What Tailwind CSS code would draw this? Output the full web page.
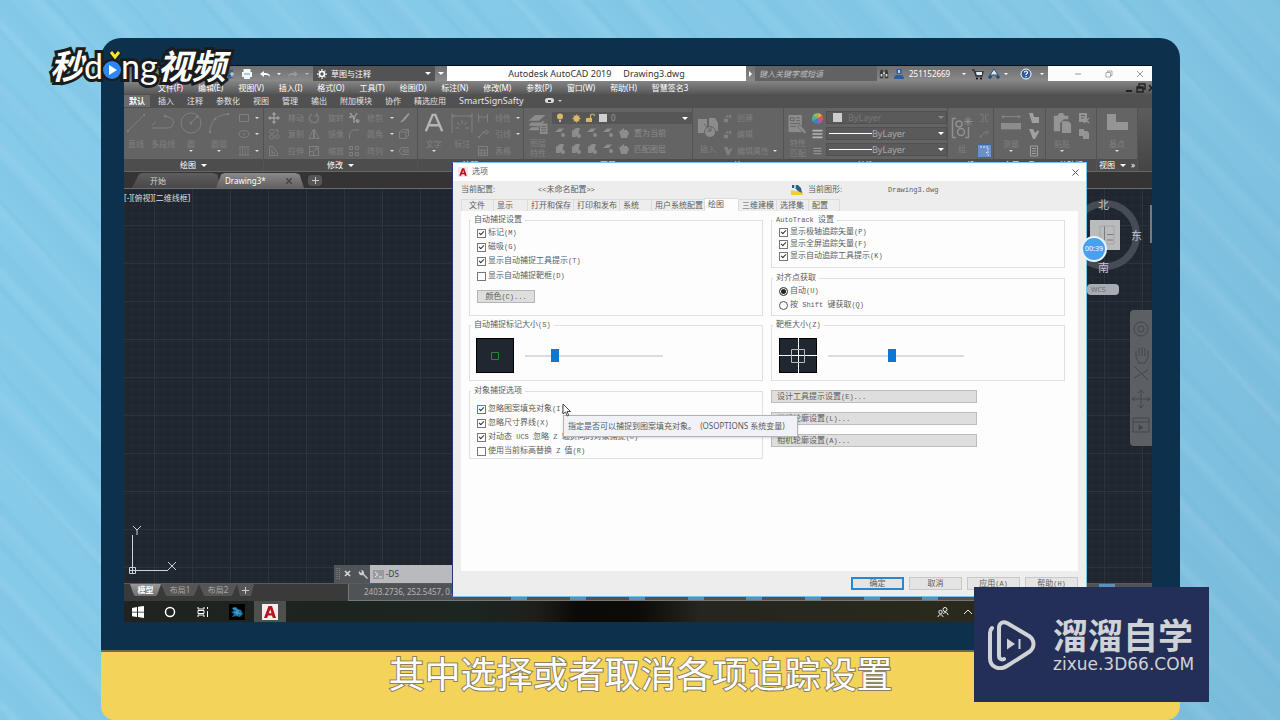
<!DOCTYPE html>
<html lang="zh-CN">
<head>
<meta charset="utf-8">
<title>AutoCAD 选项 - 绘图</title>
<script src="https://cdn.jsdelivr.net/npm/@tailwindcss/browser@4"></script>
</head>
<body class="relative flex min-h-screen flex-col overflow-hidden bg-[#82c6e4] bg-[repeating-linear-gradient(48deg,#5fa9cc00_0px,#5fa9cc22_5px,#5fa9cc00_9px,#5fa9cc1a_31px,#5fa9cc00_36px,#5fa9cc00_57px),repeating-linear-gradient(46deg,#ffffff00_0px,#ffffff12_11px,#ffffff00_17px,#ffffff00_43px),linear-gradient(120deg,#86cbea_0%,#84c8e6_60%,#7bbcdb_100%)] pt-[38px] font-['Noto_Sans','Noto_Sans_CJK_SC',sans-serif] text-[8px] leading-3">

<svg class="hidden" xmlns="http://www.w3.org/2000/svg">
  <symbol id="line" viewBox="0 0 22 22"><path d="M2 20 20 2" stroke="currentColor" fill="none"/><circle cx="20" cy="2" r="1.2" fill="currentColor"/><circle cx="2" cy="20" r="1.2" fill="currentColor"/></symbol>
  <symbol id="pline" viewBox="0 0 22 22"><path d="M0 16h16a5 5 0 0 0 0-11l-3-1M0 13l4-3" stroke="currentColor" fill="none"/><circle cx="13" cy="4" r="1.2" fill="currentColor"/></symbol>
  <symbol id="circle" viewBox="0 0 22 22"><circle cx="11" cy="11" r="10" stroke="currentColor" fill="none"/><path d="M11 11l6-6" stroke="currentColor"/><circle cx="11" cy="11" r="1.4" fill="currentColor"/><circle cx="17" cy="5" r="1.2" fill="currentColor"/></symbol>
  <symbol id="arc" viewBox="0 0 22 22"><path d="M2 20C2 9 9 3 20 2" stroke="currentColor" fill="none"/><circle cx="20" cy="2" r="1.3" fill="currentColor"/><circle cx="7" cy="7" r="1.3" fill="currentColor"/><circle cx="2" cy="20" r="1.3" fill="currentColor"/></symbol>
  <symbol id="rect" viewBox="0 0 12 12"><path d="M1.500 2.500h9v7h-9z" stroke="currentColor" fill="none"/></symbol>
  <symbol id="ellipse" viewBox="0 0 12 12"><ellipse cx="6" cy="6" rx="5" ry="3.500" stroke="currentColor" fill="none"/><path d="M5 6h2" stroke="currentColor"/></symbol>
  <symbol id="hatch" viewBox="0 0 12 12"><path d="M2 1v10M4.500 1v10M7 1v10M10 1v10M1 2h10M1 10h10" stroke="currentColor" stroke-width=".8" fill="none"/></symbol>
  <symbol id="move" viewBox="0 0 12 12"><path d="M6 1v10M1 6h10M4.500 2.500 6 1l1.500 1.500M4.500 9.500 6 11l1.500-1.500M2.500 4.500 1 6l1.500 1.500M9.500 4.500 11 6 9.500 7.500" stroke="currentColor" stroke-width="1.300" fill="none"/></symbol>
  <symbol id="copy" viewBox="0 0 12 12"><circle cx="4" cy="3.500" r="2.200" stroke="currentColor" fill="none"/><circle cx="3.500" cy="9" r="2" stroke="currentColor" fill="none"/><circle cx="9" cy="8.500" r="2" stroke="currentColor" fill="none"/><path d="M7 2h3v3" stroke="currentColor" fill="none"/></symbol>
  <symbol id="stretch" viewBox="0 0 12 12"><path d="M1.500 1.500v9h8V8L5 1.500zM4 4v4h3" stroke="currentColor" fill="none"/></symbol>
  <symbol id="rotate" viewBox="0 0 12 12"><path d="M4 2.200A4.500 4.500 0 1 0 9 3M9 1v3H6" stroke="currentColor" stroke-width="1.200" fill="none"/></symbol>
  <symbol id="mirror" viewBox="0 0 12 12"><path d="M5.500 1 1 10.500h4.500zM6.500 1 11 10.500H6.500z" stroke="currentColor" fill="none"/></symbol>
  <symbol id="scale" viewBox="0 0 12 12"><path d="M1.500 1.500h9v9h-9zM1.500 6.500h4v4M6 6l3-3M7 3h2v2" stroke="currentColor" fill="none"/></symbol>
  <symbol id="trim" viewBox="0 0 12 12"><path d="M2 1l5 6M9 1 5 7M6 6v5M8 8l3 2M1 5h3" stroke="currentColor" stroke-width="1.300" fill="none"/><circle cx="9.500" cy="9" r="1.500" stroke="currentColor" fill="none"/></symbol>
  <symbol id="fillet" viewBox="0 0 12 12"><path d="M1.500 11V7a5 5 0 0 1 5-5H11" stroke="currentColor" fill="none"/></symbol>
  <symbol id="array" viewBox="0 0 12 12"><path d="M1.500 1.500h3v3h-3zM7.500 1.500h3v3h-3zM1.500 7.500h3v3h-3zM7.500 7.500h3v3h-3z" stroke="currentColor" fill="none"/></symbol>
  <symbol id="erase" viewBox="0 0 12 12"><path d="M10.500 1 5 7l1.500 1.500L11.500 2z" fill="currentColor"/><path d="M5 7 2 10.500l4-1.500" fill="currentColor"/></symbol>
  <symbol id="cube" viewBox="0 0 12 12"><path d="M1.500 4h6.500v6.500H1.500zM1.500 4l2.500-2.500h6.500L8 4M10.500 1.500V8L8 10.500" stroke="currentColor" fill="none"/></symbol>
  <symbol id="offset" viewBox="0 0 12 12"><path d="M11 2.500H5a3.500 3.500 0 0 0 0 7h6M11 5H6a1 1 0 0 0 0 2h5" stroke="currentColor" fill="none"/></symbol>
  <symbol id="bigA" viewBox="0 0 22 22"><path d="M2 20 9.500 2h3L20 20M5 13.500h12" stroke="currentColor" stroke-width="2.600" fill="none"/></symbol>
  <symbol id="dim" viewBox="0 0 22 22"><path d="M1 1v20M21 1v20M1 4h20M3 2.500 1.500 4 3 5.500M19 2.500 20.500 4 19 5.500M11 8v4M6 10l3 3M16 10l-3 3M4 16h4M14 16h4" stroke="currentColor" fill="none"/></symbol>
  <symbol id="linear" viewBox="0 0 12 12"><path d="M1.500 2v8M10.500 2v8M1.500 5h9" stroke="currentColor" fill="none"/></symbol>
  <symbol id="leader" viewBox="0 0 12 12"><path d="M2 10 6 4h2" stroke="currentColor" fill="none"/><circle cx="9.500" cy="4" r="1.700" stroke="currentColor" fill="none"/><path d="M1 11v-3h2z" fill="currentColor"/></symbol>
  <symbol id="table" viewBox="0 0 12 12"><path d="M1.500 1.500h9v9h-9zM1.500 5h9M4.500 5v5.500M7.500 5v5.500M1.500 8h9" stroke="currentColor" fill="none"/></symbol>
  <symbol id="layers" viewBox="0 0 22 22"><path d="M1 7 8 1h11l-7 6zM1 12l3-3h10l3-2 1 1-6 5zM1 17l3-3h8v3z" fill="currentColor"/><path d="M13 10h8v11h-8z" fill="currentColor"/><path d="M14.500 13h5M14.500 15.500h5M14.500 18h5" stroke="#646464"/></symbol>
  <symbol id="layer1" viewBox="0 0 12 12"><path d="M1 5 5 1.500h5L7 5z" fill="currentColor"/><circle cx="9" cy="8" r="2" fill="currentColor"/></symbol>
  <symbol id="layer2" viewBox="0 0 12 12"><path d="M2 4 6 1h4L9 4v3l-3 3H2z" fill="currentColor"/><circle cx="9" cy="9" r="2" fill="currentColor"/></symbol>
  <symbol id="layer3" viewBox="0 0 12 12"><path d="M1 5 6 1v2h3l2 3-2 5H3L2 7z" fill="currentColor"/></symbol>
  <symbol id="insert" viewBox="0 0 22 22"><path d="M1 2h9v14H1zM12 1h6l3 5v8h-9z" fill="currentColor"/><circle cx="13" cy="15" r="5.500" fill="currentColor" stroke="#646464"/><path d="M7 7l7 7M14 10v4h-4" stroke="#646464" fill="none"/></symbol>
  <symbol id="blk" viewBox="0 0 12 12"><path d="M1 7h5v4H1zM7 2l4 1-4 4zM2 5l4-3v3z" fill="currentColor"/></symbol>
  <symbol id="tag" viewBox="0 0 12 12"><path d="M1 1h4l2 4 3-3 1 2-4 7H5z" fill="currentColor"/></symbol>
  <symbol id="match" viewBox="0 0 22 22"><path d="M1 1h14v18H1z" fill="currentColor"/><path d="M3 4h4v3H3zM9 4h4M9 7h4M3 10h10M3 13h6" stroke="#646464" fill="none"/><path d="M13 11l7 8-2 2-7-7z" fill="currentColor" stroke="#646464" stroke-width=".7"/></symbol>
  <symbol id="bars" viewBox="0 0 12 12"><path d="M0 1h12v2H0zM0 5h12v2H0zM0 9h12v2H0z" fill="currentColor"/></symbol>
  <symbol id="group" viewBox="0 0 22 22"><path d="M5 1.500H1.500v19H5M14 20.500h3.500V10" stroke="currentColor" stroke-width="1.500" fill="none"/><circle cx="8" cy="7" r="3" stroke="currentColor" stroke-width="1.500" fill="none"/><circle cx="10" cy="15" r="3.500" stroke="currentColor" stroke-width="1.500" fill="none"/><path d="M17 0v9M12.500 4.500h9M14 1.500l6 6M20 1.500l-6 6" stroke="currentColor"/></symbol>
  <symbol id="ungroup" viewBox="0 0 12 12"><path d="M1 2h4v8H1M11 2H8v8h3" stroke="currentColor" fill="none"/></symbol>
  <symbol id="measure" viewBox="0 0 22 22"><path d="M1 4h20M3 2 1 4l2 2M19 2l2 2-2 2" stroke="currentColor" fill="none"/><path d="M0 11h22v7H0z" fill="currentColor"/></symbol>
  <symbol id="pick" viewBox="0 0 12 12"><path d="M1 1h4l1 4h5v6H4z" fill="currentColor"/></symbol>
  <symbol id="calc" viewBox="0 0 12 12"><path d="M2.500 1h7v10h-7zM4 3.500h4M4 6h4M4 8.500h4" stroke="currentColor" fill="none"/></symbol>
  <symbol id="paste" viewBox="0 0 22 22"><path d="M2 3h4l2-3h4l2 3h4v4h-5L9 11v9H2z" fill="currentColor"/><path d="M11 9h7l3 3v10H11z" fill="currentColor"/></symbol>
  <symbol id="base" viewBox="0 0 22 22"><path d="M1 2h9v8h12v8H1z" fill="currentColor"/></symbol>
  <symbol id="cut" viewBox="0 0 12 12"><path d="M1 1h8v9H1z" fill="currentColor"/><path d="M6 6l5 5M11 6l-5 5" stroke="currentColor" stroke-width="1.300"/><path d="M3 3.500h4M3 6h3" stroke="#646464"/></symbol>
  <symbol id="dogear" viewBox="0 0 12 12"><path d="M1 1h5v2h3l2 2v6H5V8H1z" fill="currentColor"/></symbol>
  <symbol id="cadA" viewBox="0 0 16 16"><path d="M2 14 6.500 2h3.500L14 14h-3.200l-.8-2.500H6L5.200 14zM6.800 9.300h2.700L8.300 5.200z" fill="#b3161f" fill-rule="evenodd"/></symbol>
</svg>

<main class="mr-[100px] ml-[101px] flex flex-1 flex-col">
 <div class="flex flex-1 flex-col rounded-t-[20px] bg-[#0d304d] pt-[27px] pr-7 pb-7 pl-[23px]">
  <div class="relative flex flex-1 flex-col overflow-hidden border-t border-[#0a0f1c] bg-[#3a3a3a]">

   <!-- title bar -->
   <header class="flex h-[15px] shrink-0 items-center bg-linear-to-b from-[#6e6e6e] to-[#8a8a8a] text-white">
    <div class="flex w-[189px] items-center justify-end gap-[6px] pr-1">
     <svg class="h-3 w-2" viewBox="0 0 8 12"><path d="M1 2l5-1v9l-5 1z" fill="#3f5f86"/><path d="M3 6h4M5 4v5" stroke="#dfe8f2"/></svg>
     <svg class="h-3 w-3" viewBox="0 0 12 12"><path d="M2.500 1h7v3h-7zM1 4h10v5H1zM3 8h6v3H3z" fill="#f4f8fb"/><path d="M3 6h6" stroke="#5b9ad0"/></svg>
     <svg class="h-3 w-3" viewBox="0 0 12 12"><path d="M1 6l4-3v2c4 0 6 1 6 4-1-2-3-2-6-2v2z" fill="#fff"/></svg>
     <i class="border-x-2 border-t-2 border-x-transparent border-t-white"></i>
     <svg class="h-3 w-3" viewBox="0 0 12 12"><path d="M11 6 7 3v2C3 5 1 6 1 9c1-2 3-2 6-2v2z" fill="#999"/></svg>
     <i class="border-x-2 border-t-2 border-x-transparent border-t-[#bbb]"></i>
    </div>
    <button class="flex h-full w-[122px] items-center gap-1 bg-[#535353] px-1">
     <svg class="h-[10px] w-[10px]" viewBox="0 0 12 12"><circle cx="6" cy="6" r="3" fill="none" stroke="#fff" stroke-width="2"/><path d="M6 0v2M6 10v2M0 6h2M10 6h2M2 2l1 1M9 9l1 1M10 2 9 3M2 10l1-1" stroke="#fff" stroke-width="1.500"/></svg>
     <span>草图与注释</span>
     <i class="ml-auto border-x-[3px] border-t-[3px] border-x-transparent border-t-white"></i>
    </button>
    <div class="flex w-3 justify-center"><i class="border-x-[3px] border-t-[3px] border-x-transparent border-t-white"></i></div>
    <h1 class="flex h-full w-[299px] items-center justify-center gap-3 bg-white text-[9px] text-[#333]"><span>Autodesk AutoCAD 2019</span><span>Drawing3.dwg</span></h1>
    <div class="flex w-[9px] justify-center"><i class="border-y-[3px] border-l-[3px] border-y-transparent border-l-white"></i></div>
    <input aria-label="搜索" placeholder="键入关键字或短语" class="h-full w-[122px] bg-[#626262] px-1 text-[8px] italic placeholder:text-[#bdbdbd]">
    <div class="flex flex-1 items-center gap-1 pl-[2px]">
     <svg class="h-3 w-[10px]" viewBox="0 0 12 12"><path d="M1 11V5l1-4h3v10zM7 11V1h3l1 4v6z" fill="#3b3b3b"/><path d="M2 6h2v3H2zM8 6h2v3H8zM5 4h2v2H5z" fill="#ddd"/></svg>
     <svg class="h-3 w-3" viewBox="0 0 12 12"><path d="M3.500 1h5v5h-5zM1 11c0-4 2-4 5-4s5 0 5 4z" fill="#2f5c9c"/><path d="M5 2h2v3H5z" fill="#b9d1ef"/></svg>
     <span>251152669</span>
     <i class="ml-2 border-x-2 border-t-2 border-x-transparent border-t-white"></i>
     <svg class="ml-[2px] h-3 w-3" viewBox="0 0 12 12"><path d="M0 2h2l2 6h6l1-4H3" fill="none" stroke="#2b3442" stroke-width="1.300"/><path d="M4 4h6v3H5z" fill="#e6eef7"/><circle cx="5" cy="10.500" r="1"/><circle cx="9" cy="10.500" r="1"/></svg>
     <svg class="h-3 w-3" viewBox="0 0 12 12"><path d="M6 1 2 7h8z" fill="#dfe9f5" stroke="#2a4a78"/><path d="M0 9h4M8 9h4M2 7v4M10 7v4" stroke="#2a4a78" stroke-width="1.500"/></svg>
     <i class="border-x-2 border-t-2 border-x-transparent border-t-white"></i>
     <svg class="ml-2 h-3 w-3" viewBox="0 0 12 12"><circle cx="6" cy="6" r="5" fill="#2f5c9c" stroke="#fff"/><path d="M4.500 4.500c0-2 3-2 3 0 0 1.300-1.500 1-1.500 2.500M6 8v1.300" fill="none" stroke="#fff" stroke-width="1.200"/></svg>
     <i class="ml-1 border-x-2 border-t-2 border-x-transparent border-t-white"></i>
    </div>
    <div class="flex h-full w-[104px] items-center justify-between bg-[#fcfcfc] pr-2 pl-[26px]">
     <button aria-label="最小化"><svg class="h-2 w-2" viewBox="0 0 8 8"><path d="M1 4h6" stroke="#999"/></svg></button>
     <button aria-label="还原"><svg class="h-2 w-2" viewBox="0 0 8 8"><path d="M1 2.500h4.500V7H1zM2.500 2.500v-1.500H7v4.500H5.500" fill="none" stroke="#999" stroke-width=".8"/></svg></button>
     <button aria-label="关闭"><svg class="h-2 w-2" viewBox="0 0 8 8"><path d="M1 1l6 6M7 1 1 7" stroke="#999"/></svg></button>
    </div>
   </header>

   <!-- menu bar -->
   <nav class="flex h-[13px] shrink-0 items-center gap-[15px] bg-linear-to-b from-[#858585] to-[#575757] pl-[34px] whitespace-nowrap text-white">
    <a href="#">文件(F)</a><a href="#">编辑(E)</a><a href="#">视图(V)</a><a href="#">插入(I)</a><a href="#">格式(O)</a><a href="#">工具(T)</a><a href="#">绘图(D)</a><a href="#">标注(N)</a><a href="#">修改(M)</a><a href="#">参数(P)</a><a href="#">窗口(W)</a><a href="#">帮助(H)</a><a href="#">智慧签名3</a>
    <svg class="ml-auto h-[10px] w-[26px]" viewBox="0 0 26 10"><path d="M0 8h6" stroke="#222" stroke-width="2"/><path d="M11 4h6v5h-6zM13 4V1h6v5h-2M11 5h6" fill="none" stroke="#222" stroke-width="1.400"/><path d="M23 2l5 6M28 2l-5 6" stroke="#222" stroke-width="1.500"/></svg>
   </nav>

   <!-- ribbon tabs -->
   <nav class="flex h-[13px] shrink-0 items-center gap-[13px] bg-[#515151] whitespace-nowrap text-[#e4e4e4]">
    <a href="#" class="-mr-[5px] bg-[#6b6b6b] px-[5px] font-bold text-white">默认</a><a href="#">插入</a><a href="#">注释</a><a href="#">参数化</a><a href="#">视图</a><a href="#">管理</a><a href="#">输出</a><a href="#">附加模块</a><a href="#">协作</a><a href="#">精选应用</a><a href="#" class="text-[9px]">SmartSignSafty</a>
    <span class="ml-2 flex items-center gap-1"><i class="flex h-[5px] w-[9px] items-center justify-center rounded-sm bg-[#ddd]"><i class="h-[2px] w-[3px] bg-[#444]"></i></i><i class="border-x-2 border-t-2 border-x-transparent border-t-[#ccc]"></i></span>
   </nav>

   <!-- ribbon panels -->
   <div class="flex h-16 shrink-0 border-t border-[#505050] bg-[#646464] text-[#808080] [&_i.dn]:mx-auto [&_i.dn]:h-0 [&_i.dn]:w-0 [&_i.dn]:border-x-2 [&_i.dn]:border-t-2 [&_i.dn]:border-x-transparent [&_i.dn]:border-t-[#dcdcdc] [&_section]:flex [&_section]:shrink-0 [&_section]:flex-col [&_section]:border-r [&_section]:border-[#535353] [&_section>div]:flex [&_section>div]:h-[51px] [&_section>div]:pt-[2px] [&_h2]:flex [&_h2]:h-3 [&_h2]:items-center [&_h2]:justify-center [&_h2]:gap-[5px] [&_h2]:bg-[#4d4d4d] [&_h2]:text-white [&_button]:whitespace-nowrap">
    <section class="w-[140px]">
     <div>
      <button class="flex w-6 flex-col items-center"><svg class="mt-[2px] mb-1 h-[22px] w-5 shrink-0"><use href="#line"/></svg>直线</button>
      <button class="flex w-[30px] flex-col items-center"><svg class="mt-[2px] mb-1 h-[22px] w-[22px] shrink-0"><use href="#pline"/></svg>多段线</button>
      <button class="flex w-[26px] flex-col items-center"><svg class="mt-[2px] mb-1 h-[22px] w-[22px] shrink-0"><use href="#circle"/></svg>圆<i class="dn"></i></button>
      <button class="flex w-[30px] flex-col items-center"><svg class="mt-[2px] mb-1 h-[22px] w-[22px] shrink-0"><use href="#arc"/></svg>圆弧<i class="dn"></i></button>
      <div class="grid flex-1 grid-cols-2 grid-rows-3 items-center pl-1"><svg class="h-3 w-3"><use href="#rect"/></svg><i class="dn"></i><svg class="h-3 w-3"><use href="#ellipse"/></svg><i class="dn"></i><svg class="h-3 w-3"><use href="#hatch"/></svg><i class="dn"></i></div>
     </div>
     <h2>绘图<i class="border-x-[3px] border-t-[3px] border-x-transparent border-t-white"></i></h2>
    </section>
    <section class="w-[154px]">
     <div>
      <div class="grid flex-1 grid-cols-[16px_24px_16px_24px_16px_22px_12px_16px] grid-rows-3 items-center pl-1 text-left">
       <svg class="h-3 w-3 text-[#a0a0a0]"><use href="#move"/></svg><button>移动</button><svg class="h-3 w-3"><use href="#rotate"/></svg><button>旋转</button><svg class="h-3 w-3 text-[#a0a0a0]"><use href="#trim"/></svg><button>修剪</button><i class="dn"></i><svg class="h-3 w-3 text-[#a0a0a0]"><use href="#erase"/></svg>
       <svg class="h-3 w-3"><use href="#copy"/></svg><button>复制</button><svg class="h-3 w-3"><use href="#mirror"/></svg><button>镜像</button><svg class="h-3 w-3"><use href="#fillet"/></svg><button>圆角</button><i class="dn"></i><svg class="h-3 w-3"><use href="#cube"/></svg>
       <svg class="h-3 w-3"><use href="#stretch"/></svg><button>拉伸</button><svg class="h-3 w-3"><use href="#scale"/></svg><button>缩放</button><svg class="h-3 w-3"><use href="#array"/></svg><button>阵列</button><i class="dn"></i><svg class="h-3 w-3"><use href="#offset"/></svg>
      </div>
     </div>
     <h2>修改<i class="border-x-[3px] border-t-[3px] border-x-transparent border-t-white"></i></h2>
    </section>
    <section class="w-[106px]">
     <div>
      <button class="flex w-[32px] flex-col items-center"><svg class="mt-[2px] mb-1 h-[22px] w-5 shrink-0 text-[#b4b4b4]"><use href="#bigA"/></svg>文字<i class="dn"></i></button>
      <button class="flex w-[26px] flex-col items-center"><svg class="mt-[2px] mb-1 h-[22px] w-[22px] shrink-0"><use href="#dim"/></svg>标注</button>
      <div class="grid flex-1 grid-cols-[16px_20px_10px] grid-rows-3 items-center pl-[2px]"><svg class="h-3 w-3"><use href="#linear"/></svg><button>线性</button><i class="dn"></i><svg class="h-3 w-3"><use href="#leader"/></svg><button>引线</button><i class="dn"></i><svg class="h-3 w-3"><use href="#table"/></svg><button>表格</button></div>
     </div>
     <h2>注释</h2>
    </section>
    <section class="w-[169px]">
     <div>
      <button class="w-[28px] leading-[10px]"><svg class="mx-auto mt-[2px] mb-[3px] h-[21px] w-[22px] text-[#8c8c8c]"><use href="#layers"/></svg>图层<br>特性</button>
      <div class="flex flex-1 flex-col">
       <div class="mt-[2px] flex h-3 items-center gap-1 bg-[#565656] px-1">
        <svg class="h-[10px] w-2" viewBox="0 0 8 10"><circle cx="4" cy="3.500" r="3" fill="#d9b869"/><path d="M3 7h2v2H3z" fill="#bbb"/></svg>
        <svg class="ml-1 h-[9px] w-[9px]" viewBox="0 0 10 10"><circle cx="5" cy="5" r="3.500" fill="#dcb765"/><path d="M5 0v10M0 5h10M1.500 1.500l7 7M8.500 1.500l-7 7" stroke="#dcb765" stroke-width=".6"/></svg>
        <svg class="h-[10px] w-[10px]" viewBox="0 0 10 10"><path d="M1 5h6v4H1z" fill="#d9b85f"/><path d="M5.500 5V3a2 2 0 0 1 4 0" fill="none" stroke="#d9b85f" stroke-width="1.200"/></svg>
        <i class="h-2 w-2 bg-[#cfcfcf]"></i><span class="text-[#999]">0</span>
        <i class="ml-auto border-x-[3px] border-t-[3px] border-x-transparent border-t-white"></i>
       </div>
       <div class="mt-[3px] grid grid-cols-[16px_16px_16px_16px_16px_1fr] grid-rows-2 items-center gap-y-1 pl-[2px] text-left text-[#8c8c8c]">
        <svg class="h-3 w-3"><use href="#layer1"/></svg><svg class="h-3 w-3"><use href="#layer2"/></svg><svg class="h-3 w-3"><use href="#layer1"/></svg><svg class="h-3 w-3"><use href="#layer1"/></svg><svg class="h-3 w-3"><use href="#layer3"/></svg><span>置为当前</span>
        <svg class="h-3 w-3"><use href="#layer2"/></svg><svg class="h-3 w-3"><use href="#layer2"/></svg><svg class="h-3 w-3"><use href="#layer2"/></svg><svg class="h-3 w-3"><use href="#layer1"/></svg><svg class="h-3 w-3"><use href="#layer3"/></svg><span>匹配图层</span>
       </div>
      </div>
     </div>
     <h2>图层</h2>
    </section>
    <section class="w-[91px]">
     <div>
      <button class="w-[30px]"><svg class="mx-auto mt-[2px] mb-1 h-[22px] w-[22px] text-[#8c8c8c]"><use href="#insert"/></svg>插入</button>
      <div class="grid flex-1 grid-cols-[14px_34px_8px] grid-rows-3 items-center text-left"><svg class="h-3 w-[10px]"><use href="#blk"/></svg><span>创建</span><i></i><svg class="h-3 w-[10px]"><use href="#blk"/></svg><span>编辑</span><i></i><svg class="h-3 w-[10px]"><use href="#tag"/></svg><span>编辑属性</span><i class="dn"></i></div>
     </div>
     <h2>块</h2>
    </section>
    <section class="w-[164px]">
     <div>
      <button class="w-[28px] leading-[10px]"><svg class="mx-auto mt-[2px] mb-[3px] h-[21px] w-[22px] text-[#8c8c8c]"><use href="#match"/></svg>特性<br>匹配</button>
      <div class="grid w-[14px] grid-rows-3 items-center"><svg class="h-[11px] w-[11px]" viewBox="0 0 12 12"><path d="M6 6V0a6 6 0 0 1 5.200 3z" fill="#f0a53a"/><path d="M6 6l5.200-3a6 6 0 0 1 0 6z" fill="#e2574c"/><path d="M6 6l5.200 3A6 6 0 0 1 6 12z" fill="#a05cc0"/><path d="M6 6v6a6 6 0 0 1-5.200-3z" fill="#3d7fd0"/><path d="M6 6 .8 9a6 6 0 0 1 0-6z" fill="#3bb5a0"/><path d="M6 6 .8 3A6 6 0 0 1 6 0z" fill="#8cc152"/></svg><svg class="h-[10px] w-[11px] text-[#b5b5b5]"><use href="#bars"/></svg><svg class="h-2 w-[11px] text-[#909090]"><use href="#bars"/></svg></div>
      <div class="grid flex-1 grid-rows-[13px_13px_13px] content-start gap-[3px] pt-[1px] text-[9px] [&>div]:flex [&>div]:items-center [&>div]:border [&>div]:border-[#505050] [&>div]:bg-[#5a5a5a] [&>div]:px-[2px] [&>div]:leading-[11px]">
       <div><i class="mr-[6px] ml-1 h-[9px] w-[9px] bg-[#cdcdcd]"></i><span class="text-[#777]">ByLayer</span><i class="ml-auto border-x-[3px] border-t-[3px] border-x-transparent border-t-[#888]"></i></div>
       <div><i class="h-px w-[43px] bg-white"></i><span class="text-[#aaa]">ByLayer</span><i class="ml-auto border-x-[3px] border-t-[3px] border-x-transparent border-t-white"></i></div>
       <div><i class="h-px w-[43px] bg-white"></i><span class="text-[#aaa]">ByLayer</span><i class="ml-auto border-x-[3px] border-t-[3px] border-x-transparent border-t-white"></i></div>
      </div>
     </div>
     <h2>特性</h2>
    </section>
    <section class="w-[46px]">
     <div>
      <button class="w-[28px]"><svg class="mx-auto mt-[2px] mb-1 h-[22px] w-[22px] text-[#909090]"><use href="#group"/></svg>组</button>
      <div class="grid w-4 grid-rows-3 items-center justify-items-center"><svg class="h-3 w-[10px]"><use href="#ungroup"/></svg><svg class="h-3 w-[10px]"><use href="#leader"/></svg><svg class="h-[14px] w-[15px]" viewBox="0 0 15 14"><path d="M.5.500h14v13H.500z" fill="#6c8fc4" stroke="#3f66a8"/><path d="M3 3h8v7M9 8l3 4" stroke="#d9e6f7" fill="none" stroke-dasharray="2 1"/></svg></div>
     </div>
     <h2>组</h2>
    </section>
    <section class="w-[52px]">
     <div>
      <button class="flex w-[34px] flex-col items-center"><svg class="mt-[2px] mb-1 h-[22px] w-5 shrink-0 text-[#8c8c8c]"><use href="#measure"/></svg>测量<i class="dn"></i></button>
      <div class="grid w-3 grid-rows-3 items-center text-[#a0a0a0]"><svg class="h-3 w-3"><use href="#pick"/></svg><svg class="h-3 w-3"><use href="#tag"/></svg><svg class="h-3 w-3"><use href="#calc"/></svg></div>
     </div>
     <h2>实用工具</h2>
    </section>
    <section class="w-[51px]">
     <div>
      <button class="flex w-[32px] flex-col items-center"><svg class="mt-[2px] mb-1 h-[22px] w-5 shrink-0 text-[#959595]"><use href="#paste"/></svg>粘贴<i class="dn"></i></button>
      <div class="grid w-3 grid-rows-3 items-center text-[#959595]"><svg class="h-3 w-3"><use href="#cut"/></svg><svg class="h-3 w-3"><use href="#dogear"/></svg></div>
     </div>
     <h2>剪贴板</h2>
    </section>
    <section class="w-[41px]">
     <div>
      <button class="flex w-full flex-col items-center"><svg class="mt-[2px] mb-1 h-[22px] w-[22px] shrink-0 text-[#959595]"><use href="#base"/></svg>基点<i class="dn"></i></button>
     </div>
     <h2>视图<i class="border-x-[3px] border-t-[3px] border-x-transparent border-t-white"></i>»</h2>
    </section>
    <div class="flex-1 bg-linear-to-b from-[#5c5c5c] to-[#454545]"></div>
   </div>

   <!-- drawing tabs -->
   <nav class="flex h-[18px] shrink-0 items-end border-y border-t-[#666] border-b-[#6a6a6a] bg-[#343434] pl-2 text-[#cfcfcf]">
    <a href="#" class="flex h-[15px] w-[88px] items-center bg-linear-to-b from-[#5e5e5e] to-[#484848] pl-[18px] [clip-path:polygon(0_100%,8%_8%,12%_0,92%_0,97%_10%,100%_100%)]">开始</a>
    <a href="#" class="-ml-1 flex h-[15px] w-[88px] items-center justify-between bg-linear-to-b from-[#8a8a8a] to-[#616161] pr-3 pl-[9px] text-white [clip-path:polygon(0_100%,6%_8%,10%_0,90%_0,95%_10%,100%_100%)]"><span>Drawing3*</span><svg class="h-[6px] w-[6px]" viewBox="0 0 6 6"><path d="M0 0l6 6M6 0 0 6" stroke="#444" stroke-width="1.500"/></svg></a>
    <button aria-label="新图形" class="ml-1 flex h-[11px] w-[14px] items-center justify-center self-center rounded-sm bg-[#555]"><svg class="h-[7px] w-[7px]" viewBox="0 0 7 7"><path d="M3.500 0v7M0 3.500h7" stroke="#ccc"/></svg></button>
   </nav>

   <!-- model space -->
   <div class="relative flex-1 bg-[#1f2630] bg-[linear-gradient(90deg,#2b333e_1px,transparent_1px),linear-gradient(#2b333e_1px,transparent_1px),repeating-linear-gradient(90deg,#232b35_0px_1px,transparent_1px_8px),repeating-linear-gradient(#232b35_0px_1px,transparent_1px_8px)] bg-[size:38px_38px,38px_38px,auto,auto] bg-[position:30px_0px,0px_36px,0_0,0_0]">
    <p class="py-[3px] text-[8px] text-[#dedede]">[-][俯视][二维线框]</p>
    <svg class="absolute bottom-2 left-1 h-[50px] w-[52px]" viewBox="0 0 52 50" fill="none" stroke="#cfd3d8"><path d="M4.500 10v32M8 45.500h32M1.500 42.500h6v6h-6zM1 45.500h7M4.500 42v7M5 1l4 4v5M13 1 9 5M40 37l8 8M48 37l-8 8"/></svg>
    <div class="absolute top-[11px] right-3 h-[70px] w-[70px] rounded-full border-[7px] border-[#454c55]"></div>
    <div class="absolute top-[31px] right-8 h-[30px] w-[30px] bg-[#b9bbbd]"><svg class="h-full w-full" viewBox="0 0 30 30" fill="none" stroke="#777c82"><path d="M14.500 6v14M17 14.500h7M17 20h6" /><path d="M10 6h14v18H10z" stroke="#a3a6aa"/></svg></div>
    <span class="absolute top-[10px] right-[43px] text-[11px] text-[#c3c6c9]">北</span>
    <span class="absolute top-[41px] right-[10px] text-[11px] text-[#c3c6c9]">东</span>
    <span class="absolute top-[73px] right-[43px] text-[11px] text-[#c3c6c9]">南</span>
    <span class="absolute top-[95px] right-[33px] h-[11px] w-8 rounded-sm bg-[#a9abb2] pl-1 text-[7px] leading-[11px] text-[#6c6e76]">WCS</span>
    <i class="absolute top-4 right-0 h-[38px] w-[2px] bg-[#777c83]"></i>
    <div class="absolute top-[121px] right-0 h-[136px] w-[22px] rounded-l-sm bg-[#5c5f64]">
     <svg class="h-full w-full" viewBox="0 0 22 136" fill="none" stroke="#43464b"><circle cx="11" cy="19" r="7"/><circle cx="11" cy="19" r="3"/><path d="M6 41v6l3 6h6l3-6v-7M9 46v-8M12 46v-9M15 46v-8M4 68l14-8M4 56l14 14M11 80v18M2 89h18M8 83l3-3 3 3M8 95l3 3 3-3M5 87l-3 2 3 2M17 87l3 2-3 2M3 108h16v14H3zM3 112h16"/><path d="M9 115v5l4-2.500z" fill="#43464b"/></svg>
    </div>
    <!-- command line -->
    <div class="absolute bottom-0 left-[210px] flex h-[18px] w-[120px] items-center bg-[#505357]">
     <svg class="h-full w-9 shrink-0" viewBox="0 0 36 18"><path d="M3 3v12M5.500 3v12" stroke="#888" stroke-dasharray="1 1"/><path d="M11 6l5 5M16 6l-5 5" stroke="#ddd" stroke-width="1.500"/><path d="M25 6a3 3 0 0 0 4 4l4 4 1-1-4-4a3 3 0 0 0-3-4l1 2-1 1z" fill="#ccc"/></svg>
     <label class="flex h-full flex-1 items-center gap-[2px] bg-[#b9babe] pl-[3px] text-[#3c3c3c]"><svg class="h-[9px] w-[11px]" viewBox="0 0 11 9"><path d="M0 0h11v9H0z" fill="#999ba0"/><path d="M2 2l3 2.500L2 7M6 7h3" stroke="#eee" fill="none"/></svg><input aria-label="命令" value="-DS" class="w-9 text-[8px]"></label>
    </div>
   </div>

   <!-- layout tabs and status bar -->
   <div class="flex h-[18px] shrink-0 border-t border-[#5b5b5b] bg-[#3a3a3a] text-[#a8a8a8]">
    <nav class="flex w-[224px] items-start pl-[6px]">
     <a href="#" class="w-[31px] bg-linear-to-b from-[#999] to-[#6e6e6e] text-center font-bold text-white [clip-path:polygon(0_0,100%_0,88%_90%,84%_100%,16%_100%,12%_90%)]">模型</a>
     <a href="#" class="w-[38px] bg-[#555] text-center [clip-path:polygon(0_0,100%_0,88%_90%,84%_100%,16%_100%,12%_90%)]">布局1</a>
     <a href="#" class="w-[38px] bg-[#555] text-center [clip-path:polygon(0_0,100%_0,88%_90%,84%_100%,16%_100%,12%_90%)]">布局2</a>
     <button aria-label="新布局" class="flex h-3 w-[17px] items-center justify-center bg-[#555] [clip-path:polygon(0_0,100%_0,82%_100%,18%_100%)]"><svg class="h-[7px] w-[7px]" viewBox="0 0 7 7"><path d="M3.500 0v7M0 3.500h7" stroke="#ccc"/></svg></button>
    </nav>
    <div class="flex flex-1 items-end border-b border-l border-[#777] bg-[#505356] pl-[15px] text-[#b5b5b5]">
     <span class="w-[110px] self-center">2403.2736, 252.5457, 0.0000</span>
     <div class="flex h-full flex-1 justify-around px-4 [&>i]:w-4 [&>i]:bg-[#5b8fc0]"><i></i><i></i><i></i><i></i><i></i><i></i><i></i><i></i><i></i><i></i><i></i></div>
    </div>
   </div>

   <!-- taskbar -->
   <footer class="flex h-[21px] shrink-0 items-center bg-[linear-gradient(90deg,#20231f_0%,#1b2521_34%,#1f1f1a_40%,#0a0a08_44%,#0c0b07_50%,#24261f_56%,#292a1c_80%,#25261a_100%)]">
    <svg class="ml-2 h-3 w-3" viewBox="0 0 12 12"><path d="M0 2l5-1v4.700H0zM6 .800 12 0v5.700H6zM0 6.500h5V11l-5-.8zM6 6.500h6V12l-6-.9z" fill="#fff"/></svg>
    <svg class="ml-5 h-3 w-3" viewBox="0 0 12 12"><circle cx="6" cy="6" r="4.500" fill="none" stroke="#fff" stroke-width="1.500"/></svg>
    <svg class="ml-[21px] h-3 w-3" viewBox="0 0 12 12"><path d="M1 1v2h6V1M1 11V9h6v2M1 4.500h6v3H1zM10.500 1v2M10.500 5v6" fill="none" stroke="#fff"/></svg>
    <span class="ml-5 flex h-4 w-4 items-center justify-center bg-black"><svg class="h-[14px] w-[14px]" viewBox="0 0 14 14"><path d="M2 3l4-1 2 2 3 1 2 4-3 3-4-1-4 1 2-3-3-2 3-1z" fill="#1a6f9f"/><path d="M3 3c3 0 3 3 6 3M4 8c2-1 5 0 7 1M7 6v4" stroke="#49b4e8" fill="none"/></svg></span>
    <span class="ml-[9px] flex h-full w-8 items-center justify-center bg-[#4d504d]"><span class="h-4 w-4 bg-[#f6ecec]"><svg class="h-4 w-4"><use href="#cadA"/></svg></span></span>
    <svg class="mr-[14px] ml-auto h-3 w-3" viewBox="0 0 12 12" fill="none" stroke="#eee"><circle cx="8" cy="3.500" r="2"/><circle cx="3.500" cy="6" r="1.700"/><path d="M1 11c0-3 5-3 5 0M6 8c1-2 5-2 5 1"/></svg>
    <svg class="mr-[179px] h-2 w-[10px]" viewBox="0 0 10 8"><path d="M1 6l4-4 4 4" fill="none" stroke="#eee"/></svg>
   </footer>

   <!-- options dialog -->
   <div role="dialog" aria-label="选项" class="absolute top-[96px] right-[65px] bottom-[25px] left-[328px] flex flex-col border border-[#7cc1e6] border-l-[#223a7a] bg-[#ededee] font-['Liberation_Serif','Noto_Sans_CJK_SC',serif] text-[#5c5c5c] [&_kbd]:font-['Liberation_Mono'] [&_kbd]:text-[7px]">
    <div class="flex h-[18px] shrink-0 items-center gap-1 bg-white px-[5px]">
     <svg class="h-[10px] w-[10px] bg-[#f7e6e6]"><use href="#cadA"/></svg><span>选项</span>
     <button aria-label="关闭" class="ml-auto"><svg class="mr-[2px] h-[7px] w-[7px]" viewBox="0 0 7 7"><path d="M.500.500l6 6M6.500.500l-6 6" stroke="#555"/></svg></button>
    </div>
    <div class="flex h-[17px] shrink-0 items-center px-2">
     <span class="w-[77px]">当前配置:</span><span class="w-[253px]"><kbd>&lt;&lt;</kbd>未命名配置<kbd>&gt;&gt;</kbd></span>
     <svg class="mr-[5px] h-3 w-3" viewBox="0 0 12 12"><path d="M0 6l4 1h7l1 4H0z" fill="#f0cf2a"/><path d="M1 1h6l3 3 1 5-4-2-3-3H1z" fill="#2d5f8d"/><path d="M3 1h2v3H3z" fill="#9fd0ef"/></svg>
     <span class="w-20">当前图形:</span><kbd>Drawing3.dwg</kbd>
    </div>
    <div role="tablist" class="mx-2 flex h-[13px] shrink-0 items-end whitespace-nowrap [&>button]:h-3 [&>button]:border-t [&>button]:border-l [&>button]:border-[#dcdcdc] [&>button]:pl-[3px] [&>button]:text-left">
     <button role="tab" class="w-8">&nbsp; 文件</button><button role="tab" class="w-[34px]">显示</button><button role="tab" class="w-[46px]">打开和保存</button><button role="tab" class="w-[46px]">打印和发布</button><button role="tab" class="w-8">系统</button><button role="tab" class="w-[53px]">用户系统配置</button><button role="tab" aria-selected="true" class="w-[34px] self-start bg-[#fdfdfd] pb-[13px]">绘图</button><button role="tab" class="w-[38px]">三维建模</button><button role="tab" class="w-8">选择集</button><button role="tab" class="w-8 border-r">配置</button>
    </div>
    <div class="mx-2 grid flex-1 grid-cols-[294px_294px] content-start gap-x-2 bg-[#fdfdfd] px-2 pt-[3px] [&_fieldset]:border [&_fieldset]:border-[#e0e0e0] [&_fieldset]:pl-[7px] [&_legend]:-ml-[6px] [&_legend]:px-[3px] [&_label]:flex [&_label]:items-center [&_label]:gap-[2px] [&_label]:whitespace-nowrap
      [&_input[type=checkbox]]:h-[9px] [&_input[type=checkbox]]:w-[9px] [&_input[type=checkbox]]:appearance-none [&_input[type=checkbox]]:border [&_input[type=checkbox]]:border-[#777] [&_input[type=checkbox]]:bg-white
      [&_input[type=checkbox]]:after:mt-[1px] [&_input[type=checkbox]]:after:ml-[1px] [&_input[type=checkbox]]:after:hidden [&_input[type=checkbox]]:after:h-[3px] [&_input[type=checkbox]]:after:w-[5px] [&_input[type=checkbox]]:after:-rotate-45 [&_input[type=checkbox]]:after:border-b [&_input[type=checkbox]]:after:border-l [&_input[type=checkbox]]:after:border-[#333] [&_input[type=checkbox]:checked]:after:block
      [&_input[type=radio]]:h-[9px] [&_input[type=radio]]:w-[9px] [&_input[type=radio]]:appearance-none [&_input[type=radio]]:rounded-full [&_input[type=radio]]:border [&_input[type=radio]]:border-[#555] [&_input[type=radio]:checked]:bg-[#222] [&_input[type=radio]:checked]:shadow-[inset_0_0_0_1px_white]
      [&_input[type=range]]:h-[13px] [&_input[type=range]]:appearance-none [&_input[type=range]]:bg-[linear-gradient(#dcdcdc,#dcdcdc)] [&_input[type=range]]:bg-[size:100%_2px] [&_input[type=range]]:bg-center [&_input[type=range]]:bg-no-repeat [&_input::-webkit-slider-thumb]:h-[13px] [&_input::-webkit-slider-thumb]:w-2 [&_input::-webkit-slider-thumb]:appearance-none [&_input::-webkit-slider-thumb]:bg-[#0a78d7]">
     <div class="flex flex-col gap-[3px]">
      <fieldset class="pb-3"><legend>自动捕捉设置</legend>
       <label class="h-[14px]"><input type="checkbox" checked><span>标记<kbd>(M)</kbd></span></label>
       <label class="h-[14px]"><input type="checkbox" checked><span>磁吸<kbd>(G)</kbd></span></label>
       <label class="h-[14px]"><input type="checkbox" checked><span>显示自动捕捉工具提示<kbd>(T)</kbd></span></label>
       <label class="h-4"><input type="checkbox"><span>显示自动捕捉靶框<kbd>(D)</kbd></span></label>
       <button class="mt-[6px] block h-[13px] w-[58px] border border-[#b5b5b5] bg-[#dedede] leading-[11px]">颜色<kbd>(C)...</kbd></button>
      </fieldset>
      <fieldset class="py-[7px]"><legend>自动捕捉标记大小<kbd>(S)</kbd></legend>
       <div class="-ml-[1px] flex items-center gap-[11px]">
        <svg class="h-[35px] w-[38px]" viewBox="0 0 38 35"><path d="M0 0h38v35H0z" fill="#000"/><path d="M1 1h36v33H1z" fill="#1f2830"/><path d="M15.500 14.500h7v7h-7z" fill="none" stroke="#1f8a32"/></svg>
        <input type="range" aria-label="自动捕捉标记大小" min="0" max="100" value="20" class="w-[138px]">
       </div>
      </fieldset>
      <fieldset class="mt-[1px] pt-[5px]"><legend>对象捕捉选项</legend>
       <label class="h-[14px] [&>input]:!border-[#2a8ad6]"><input type="checkbox" checked><span>忽略图案填充对象<kbd>(I)</kbd></span></label>
       <label class="h-[14px]"><input type="checkbox" checked><span>忽略尺寸界线<kbd>(X)</kbd></span></label>
       <label class="h-[14px]"><input type="checkbox" checked><span>对动态<kbd> UCS </kbd>忽略<kbd> Z </kbd>轴负向的对象捕捉<kbd>(O)</kbd></span></label>
       <label class="h-[14px]"><input type="checkbox"><span>使用当前标高替换<kbd> Z </kbd>值<kbd>(R)</kbd></span></label>
      </fieldset>
     </div>
     <div class="flex flex-col gap-[3px]">
      <fieldset class="pb-[5px]"><legend><kbd>AutoTrack </kbd>设置</legend>
       <label class="h-3"><input type="checkbox" checked><span>显示极轴追踪矢量<kbd>(P)</kbd></span></label>
       <label class="h-3"><input type="checkbox" checked><span>显示全屏追踪矢量<kbd>(F)</kbd></span></label>
       <label class="h-3"><input type="checkbox" checked><span>显示自动追踪工具提示<kbd>(K)</kbd></span></label>
      </fieldset>
      <fieldset class="mt-[1px] pb-[3px]"><legend>对齐点获取</legend>
       <label class="h-[14px]"><input type="radio" name="acquire" checked><span>自动<kbd>(U)</kbd></span></label>
       <label class="h-[14px]"><input type="radio" name="acquire"><span>按<kbd> Shift </kbd>键获取<kbd>(Q)</kbd></span></label>
      </fieldset>
      <fieldset class="py-[7px]"><legend>靶框大小<kbd>(Z)</kbd></legend>
       <div class="flex items-center gap-[11px]">
        <svg class="h-[35px] w-[38px]" viewBox="0 0 38 35"><path d="M0 0h38v35H0z" fill="#000"/><path d="M1 1h36v33H1z" fill="#1f2830"/><path d="M19.500 0v35M0 17.500h38" stroke="#fff"/><path d="M12.500 11.500h13v13h-13z" fill="none" stroke="#bbb"/></svg>
        <input type="range" aria-label="靶框大小" min="0" max="100" value="47" class="w-[136px]">
       </div>
      </fieldset>
      <div class="mt-[6px] flex w-[206px] flex-col gap-[9px] [&>button]:h-[13px] [&>button]:border [&>button]:border-[#bdbdbd] [&>button]:bg-[#dedede] [&>button]:pl-[5px] [&>button]:text-left [&>button]:leading-[11px]">
       <button>设计工具提示设置<kbd>(E)...</kbd></button>
       <button>光线轮廓设置<kbd>(L)...</kbd></button>
       <button>相机轮廓设置<kbd>(A)...</kbd></button>
      </div>
     </div>
    </div>
    <div class="flex h-[25px] shrink-0 items-center justify-end gap-[5px] pr-2 [&>button]:h-[13px] [&>button]:w-[53px] [&>button]:border [&>button]:border-[#c8c8c8] [&>button]:bg-[#e4e4e4] [&>button]:leading-[11px]">
     <button class="!border-2 !border-[#2588d4] !leading-[9px]">确定</button><button>取消</button><button>应用<kbd>(A)</kbd></button><button>帮助<kbd>(H)</kbd></button>
    </div>

    <div role="tooltip" class="absolute top-[252px] left-[110px] border border-[#b3b3b8] bg-[#f1f2f7] py-1 pr-3 pl-1 font-['Noto_Sans','Noto_Sans_CJK_SC',sans-serif] whitespace-nowrap text-[#5a5a5a] shadow-sm">指定是否可以捕捉到图案填充对象。&nbsp; (OSOPTIONS 系统变量)</div>
    <svg class="absolute top-[240px] left-[109px] h-[14px] w-[9px]" viewBox="0 0 9 14"><path d="M1 1v10l2.500-2 1.700 4 1.500-.7L5 8.500h3.500z" fill="#fff" stroke="#333" stroke-width=".9"/></svg>
   </div>

   <!-- recording timer -->
   <span class="absolute top-[170px] right-[45px] flex h-[26px] w-[26px] items-center justify-center rounded-full border-2 border-[#e9f3fb] bg-[#4aa0ee] text-[7px] text-white">00:39</span>
  </div>
 </div>
 <div class="flex h-[70px] shrink-0 items-start justify-center rounded-b-[14px] border-t-2 border-[#6f6a4d] bg-[#f4d35b]">
  <p class="font-['Noto_Sans_CJK_SC',sans-serif] text-[36px] leading-10 font-normal whitespace-nowrap text-white [-webkit-text-stroke:2px_#8b8063] [paint-order:stroke_fill]">其中选择或者取消各项追踪设置</p>
 </div>
</main>

<!-- channel logo -->
<div class="absolute top-[46px] left-[50px] flex items-center font-['Lato','Noto_Sans_CJK_SC',sans-serif] text-[34px] leading-10 font-bold text-white italic [-webkit-text-stroke:6px_#1a1c1e] [paint-order:stroke_fill]">
 <span>秒</span><span class="font-normal not-italic">d</span>
 <svg class="relative h-10 w-[18px] overflow-visible" viewBox="0 0 18 40"><circle cx="9" cy="24" r="11" fill="#1a1c1e" stroke="none"/><circle cx="9" cy="24" r="9" fill="#2f86ee" stroke="none"/><path d="M6 19v10l8-5z" fill="#fff" stroke="none"/><path d="M8 6l4 5 4-5" fill="none" stroke="#1a1c1e" stroke-width="6"/><path d="M8 6l4 5 4-5" fill="none" stroke="#f5e62c" stroke-width="3"/></svg>
 <span class="font-normal not-italic">ng</span><span>视频</span>
</div>

<!-- site badge -->
<aside class="absolute right-[71px] bottom-[18px] flex h-[115px] w-[235px] items-center gap-[17px] bg-[#232f57] pl-[14px] text-[#d0d2d6]">
 <svg class="h-[50px] w-12 shrink-0" viewBox="0 0 48 50" fill="none" stroke="#d0d2d6" stroke-width="4" stroke-linecap="round" stroke-linejoin="round"><path d="M16 39c-2 1-5 0-5-3V8c0-5 4-7 8-5l22 13c6 4 6 12 0 16L19 46c-8 5-17 1-17-8V13c0-2 1-4 2-5"/><path d="M19 18.500v11l8-5.500z" fill="#d0d2d6" stroke="none"/><path d="M31.500 19v10" stroke-width="2" stroke-linecap="butt"/></svg>
 <div>
  <p class="font-['Noto_Sans_CJK_SC',sans-serif] text-[35px] leading-9 font-bold">溜溜自学</p>
  <p class="mt-[2px] font-['DejaVu_Sans',sans-serif] text-[17px] leading-5">zixue.3D66.COM</p>
 </div>
</aside>
</body>
</html>
